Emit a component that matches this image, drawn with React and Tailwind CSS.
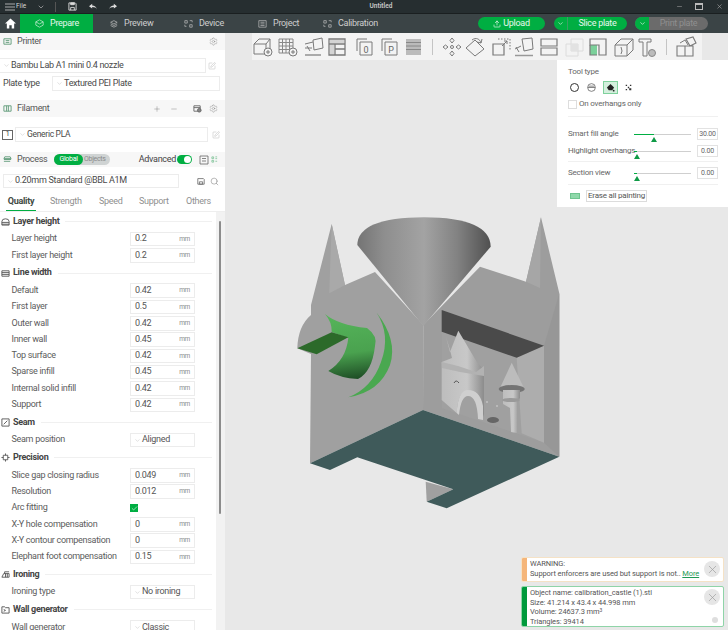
import React from 'react';
import { ChevronDown, Settings, Search, SquarePen, Plus, Minus, X, Check, Upload as UploadIcon } from 'lucide-react';

const Ic = ({ children, className = 'w-[22px] h-[22px]', sw = 1, vb = '0 0 22 22' }) => (
    <svg viewBox={vb} className={`shrink-0 ${className}`} fill="none" stroke="#7a7a7a" strokeWidth={sw}>{children}</svg>
);

// top toolbar icons, one drawing per tool
const toolbarIcons = [
    { ml: 'ml-0', el: <><path d="M2 8l5-5h11v10l-4 5H2zM2 8h12v10M14 8l4-5" /><circle cx="16" cy="16" r="4" fill="#f3f3f3" /><path d="M16 14v4M14 16h4" /></> },
    { ml: 'ml-[3px]', el: <><path d="M2 3h14v14H2zM2 6.500h14M2 10h14M2 13.500h14M5.500 3v14M9 3v14M12.500 3v14" stroke="#888" /><circle cx="16" cy="16" r="4" fill="#f3f3f3" /><path d="M16 14v4M14 16h4" /></> },
    { ml: 'ml-[4px]', el: <><path d="M10 4l9-2 1 10-9 2zM2 8l8-2M2 12l7 0M4 10l3 5" /><path d="M2 19h16" strokeWidth="2" stroke="#aaa" /></> },
    { ml: 'ml-[1px]', el: <><path d="M4 4h14v3H4zM4 9h4v9H4z" fill="#d4d4d4" stroke="none" /><path d="M3 3h16v16H3z" strokeWidth="1.300" /><path d="M3 8h16M9 8v11M9 13h10" strokeWidth="1.300" /></> },
    { ml: 'ml-[6px]', el: <><path d="M3 15V3h10M6 19V6h12v13z" /><text x="12" y="16.500" fontSize="9" textAnchor="middle" fill="#666" stroke="none">0</text></> },
    { ml: 'ml-[3px]', el: <><path d="M3 15V3h10M6 19V6h12v13z" /><text x="12" y="16.500" fontSize="9" textAnchor="middle" fill="#666" stroke="none">P</text></> },
    { ml: 'ml-[1px]', el: <><path d="M4 3h15v16H4z" fill="#bbb" stroke="none" /><path d="M4 6.500h15M4 10h15M4 13.500h15" stroke="#888" /></> },
    { sep: true, ml: 'ml-[8px]' },
    { ml: 'ml-[8px]', el: <><path d="M11 2l2 2.500-2 2.500-2-2.500zM11 15l2 2.500-2 2.500-2-2.500zM2 11l2.500-2 2.500 2-2.500 2zM15 11l2.500-2 2.500 2-2.500 2z" /><circle cx="11" cy="11" r="1.500" /></> },
    { ml: 'ml-[1px]', el: <><path d="M2 12l9-8 9 9-9 7zM8 4c4-3 8-1 9 3M17 7l1-4M17 7l-4-1" /></> },
    { ml: 'ml-[4px]', el: <><path d="M3 8h11v11H3z" strokeWidth="1.200" /><path d="M8 3h12v12" strokeDasharray="1.500 1.500" /><path d="M12 10l5-5M14 5h3v3" /></> },
    { ml: 'ml-[1px]', el: <><path d="M9 3l10-1 1 11-9 2zM2 13l6-3M3 11l3 5" /><path d="M2 19.500h18" strokeWidth="1.500" stroke="#999" /></> },
    { ml: 'ml-[3px]', el: <><path d="M3 3h16v7H3zM3 12h16v7H3z" strokeWidth="1.200" /></> },
    { ml: 'ml-[3px]', el: <><path d="M3 8h12v12H3zM8 3h12v12H8z" stroke="#dcdcdc" /><path d="M8 8h7v7H8z" fill="#e2e2e2" stroke="none" /></> },
    { ml: 'ml-[2px]', el: <><path d="M3 9h7v10H3z" fill="#7bd09a" stroke="none" /><path d="M3 3h16v16h-7V9H3z" strokeWidth="1.200" /><path d="M3 9v10h7" strokeWidth="1.200" /></> },
    { ml: 'ml-[4px]', el: <><path d="M2 9l6-6h12v11l-6 6H2zM2 9h12v11M14 9l6-6M8 11l1 4 -1 3" /></> },
    { ml: 'ml-[1px]', el: <><path d="M3 3h12v3h-4v14H7V6H3z" /><circle cx="16" cy="17" r="3.500" fill="#bbb" stroke="#888" /></> },
    { sep: true, ml: 'ml-[8px]' },
    { ml: 'ml-[8px]', el: <><path d="M2 10h8v10H2zM10 10h8v10h-8M11 3l7-2 3 6-6 3z" strokeWidth="1.100" /><path d="M5 7l5-3 3 5" /></> },
];

const Dropdown = ({ className, text, textClass = '' }) => (
    <div className={`flex items-center border border-[#ececec] bg-white ${className}`}>
        <ChevronDown size={7} strokeWidth={1} className="ml-[3px] shrink-0 text-[#999]" />
        <span className={`ml-[1px] text-[#4a4a4a] text-[9px] whitespace-nowrap ${textClass}`}>{text}</span>
    </div>
);

const Row = ({ label, value, select, check }) => (
    <div className="flex items-center h-[16.300px] pl-[11.500px]">
        <span className="w-[118.500px] text-[9px] text-[#5c5c5c] whitespace-nowrap">{label}</span>
        {check ? (
            <div className="w-[8px] h-[8px] bg-[#00ae42] flex items-center justify-center">
                <Check size={7} strokeWidth={2} className="text-white" />
            </div>
        ) : select ? (
            <Dropdown className="w-[65px] h-[14.500px]" text={value} textClass="!text-[#555]" />
        ) : (
            <div className="w-[65px] h-[14.500px] border border-[#ececec] flex items-center justify-between pl-[4px] pr-[4px]">
                <span className="text-[9px] text-[#555]">{value}</span>
                <span className="text-[6.500px] text-[#8a8a8a] pt-[1px]">mm</span>
            </div>
        )}
    </div>
);

const Group = ({ icon, title, children }) => (
    <div>
        <div className="flex items-center h-[19px] pl-[1px] pr-[4px]">
            <svg viewBox="0 0 10 10" className="w-[9px] h-[9px] shrink-0" fill="none" stroke="#555" strokeWidth="1">{icon}</svg>
            <span className="ml-[3px] text-[9px] font-bold text-[#444] whitespace-nowrap">{title}</span>
            <div className="flex-1 ml-[6px] h-px bg-[#f0f0f0]" />
        </div>
        {children}
    </div>
);

const SectionHead = ({ icon, title, children, className }) => (
    <div className={`flex items-center bg-[#f7f7f7] pl-[3px] pr-[7px] ${className}`}>
        <svg viewBox="0 0 10 10" className="w-[9px] h-[9px] shrink-0" fill="none" stroke="#5d9a78" strokeWidth="1">{icon}</svg>
        <span className="ml-[5px] text-[9px] text-[#555]">{title}</span>
        <div className="flex-1" />
        {children}
    </div>
);

const Slider = ({ label, fill, value, className }) => (
    <div className={`flex items-center ${className}`}>
        <span className="w-[66px] text-[8px] text-[#666] whitespace-nowrap">{label}</span>
        <div className="relative w-[57px] h-px bg-[#cfcfcf]">
            <div className="h-px bg-[#00ae42]" style={{ width: fill }} />
            <div
                className="absolute top-[3px] w-0 h-0 border-l-[3px] border-r-[3px] border-b-[5px] border-l-transparent border-r-transparent border-b-[#0f9a46]"
                style={{ left: fill - 3 }}
            />
        </div>
        <div className="ml-[6px] w-[21px] h-[12px] border border-[#e2e2e2] flex items-center justify-center text-[7px] text-[#666]">{value}</div>
    </div>
);

// the 3D model on the plate
const Model = () => (
    <svg viewBox="280 200 290 320" className="absolute left-[280px] top-[167px] w-[290px] h-[320px]">
        <defs>
            <linearGradient id="cone" x1="0" y1="0" x2="1" y2="0">
                <stop offset="0" stopColor="#747474" />
                <stop offset="0.2" stopColor="#8e8e8e" />
                <stop offset="0.5" stopColor="#a3a3a3" />
                <stop offset="0.75" stopColor="#828282" />
                <stop offset="1" stopColor="#505050" />
            </linearGradient>
            <linearGradient id="scoop" x1="0.4" y1="0" x2="0.5" y2="1">
                <stop offset="0" stopColor="#55b45a" />
                <stop offset="0.6" stopColor="#4aa24f" />
                <stop offset="1" stopColor="#1f4f26" />
            </linearGradient>
            <linearGradient id="tower" x1="0" y1="0" x2="1" y2="0">
                <stop offset="0" stopColor="#bdbdbd" />
                <stop offset="0.6" stopColor="#c8c8c8" />
                <stop offset="1" stopColor="#8c8c8c" />
            </linearGradient>
        </defs>
        {/* left wall */}
        <path d="M297.300 348.300Q298 326 311 315L311 305L331.700 224L345 285L375 272L423.300 325L423 410L310 463.300L311 354Z" fill="#a0a0a0" />
        <path d="M331.700 224L329.300 293.300L345 285Z" fill="#a9a9a9" />
        {/* right wall */}
        <path d="M423.300 325L480 266.700L526 281.700L541 217.300L559.300 293.300V456.700L423 410Z" fill="#9d9d9d" />
        <path d="M541 217.300L526 281.700L540 288Z" fill="#a6a6a6" />
        <path d="M544 345.700L559.300 293.300V456.700L544 442.700Z" fill="#979797" />
        {/* opening */}
        <path d="M441.700 310L544 345.700V442.700L441.700 408Z" fill="#a0a0a0" />
        <path d="M516.700 357.700L544 345.700V442.700L521.700 433.300Z" fill="#adadad" />
        <path d="M441.700 310L544 345.700L516.700 357.700L441.700 331.700Z" fill="#4a4a4a" />
        {/* cone */}
        <path d="M357.300 245Q358 217.500 424 217.300Q490 217.500 490.700 246.700L423.300 326Z" fill="url(#cone)" />
        {/* painted part */}
        <path d="M325 314Q338 325 367 328Q378 336 375 346Q372 372 358 379Q340 378 328.300 371Q346 360 348.300 338L331.700 332Q332 322 325 314Z" fill="url(#scoop)" />
        <path d="M376.700 312.700Q398 340 390 365Q380 392 348.300 397.300Q372 388 381 362Q391 335 376.700 312.700Z" fill="#4aa850" />
        <path d="M297.300 348.300L331.700 332.300L348.300 337.300L316.700 354.300Z" fill="#2c6a2a" />
        {/* castle */}
        <path d="M446 337L450 350L452 358L441.700 362V400L456.700 413Q458 392 466 392Q478 392 482 420L484 414V370L476.700 361.700L458.300 330.700L450 352Z" fill="url(#tower)" />
        <path d="M441.700 362L458 366L476 372L484 366L484 376L460 372L442 368Z" fill="#b2b2b2" />
        <path d="M454 383Q456 379 459 383" stroke="#555" fill="none" strokeWidth="1" />
        <path d="M456.700 413Q458 390 468 390Q480 390 483 406L483 420L478 419Q477 396 468 396Q461 396 459 415Z" fill="#cfcfcf" />
        <path d="M511.700 362.700L524 388H500Z" fill="#bcbcbc" />
        <ellipse cx="511.700" cy="389" rx="13" ry="4" fill="#747474" />
        <path d="M503 390H520V398L517 402V433L511 432L510 408L503 404Z" fill="url(#tower)" />
        <ellipse cx="511" cy="400" rx="9" ry="2" fill="#9a9a9a" />
        <ellipse cx="493" cy="420" rx="6" ry="3" fill="#666" />
        <circle cx="487" cy="402" r="1" fill="#c2c2c2" />
        <circle cx="497" cy="406" r="1" fill="#c2c2c2" />
        {/* bottom */}
        <path d="M425.700 481.700L453.300 489.300L426.700 501.700Z" fill="#a0a0a0" />
        <path d="M423 410L559.300 456.700L446.700 508.300L426.700 501.700L453.300 489.300L357.300 457.300L330 470L310 463.300Z" fill="#3f5a5a" />
    </svg>
);

const App = () => {
    const navTabs = [
        { label: 'Preview', cls: 'w-[75px]', icon: <path d="M2 4l4-2 4 2-4 2zM2 6l4 2 4-2M2 8l4 2 4-2" /> },
        { label: 'Device', cls: 'w-[74px]', icon: <path d="M1 2h3v3H1zM7 2h3M10 2v2M1 7v2h2M7 7h3v3H7z" /> },
        { label: 'Project', cls: 'w-[65px]', icon: <path d="M1 2h9v8H1zM3 4h5M3 6h5M3 8h5" /> },
        { label: 'Calibration', cls: 'w-[90px]', icon: <path d="M1 2h3v3H1zM7 2h3M10 2v2M1 7v2h2M7 7h3v3H7z" /> },
    ];

    return (
        <div className="relative w-[728px] h-[630px] overflow-hidden flex flex-col bg-[#e8e8e8] tracking-[-0.3px]" style={{ fontFamily: 'Roboto, sans-serif' }}>
            {/* Title bar */}
            <div className="flex items-center h-[14px] bg-[#262e30] text-[#d6d6d6] border-b border-[#1a1f20] relative tracking-normal">
                <svg viewBox="0 0 10 8" className="ml-[5px] w-[10px] h-[8px]" stroke="#ccc" strokeWidth="0.800"><path d="M0 1h10M0 4h10M0 7h10" /></svg>
                <span className="ml-[1px] w-[9px] text-[6.500px]">File</span>
                <ChevronDown size={8} className="ml-[12px] text-[#bbb]" />
                <div className="ml-[10px] w-px h-[10px] bg-[#555]" />
                <svg viewBox="0 0 10 10" className="ml-[12px] w-[9px] h-[9px]" fill="none" stroke="#ddd" strokeWidth="1"><path d="M1 1h7l1 1v7H1zM3 9V6h4v3" /><path d="M3 1h4v2H3z" fill="#ddd" /></svg>
                <svg viewBox="0 0 10 10" className="ml-[12px] w-[8px] h-[8px]" fill="#ddd"><path d="M0 4L4 1v2c3 0 5 2 6 5-1-2-3-3-6-3v2z" /></svg>
                <svg viewBox="0 0 10 10" className="ml-[12px] w-[8px] h-[8px]" fill="#ddd"><path d="M10 4L6 1v2C3 3 1 5 0 8c1-2 3-3 6-3v2z" /></svg>
                <span className="absolute left-[381px] text-[6.500px] font-semibold text-[#c8c8c8] -translate-x-1/2">Untitled</span>
                <div className="flex-1" />
                <Minus size={7} className="text-[#999]" />
                <div className="ml-[12px] w-[8px] h-[7px] border border-[#bbb] border-t-2" />
                <X size={7} className="ml-[13px] mr-[5px] text-[#aaa]" />
            </div>

            {/* Nav bar */}
            <div className="flex items-center h-[19px] bg-[#3b4446] text-[#cfcfcf] text-[9px]">
                <div className="w-[20px] flex justify-center">
                    <svg viewBox="0 0 12 12" className="w-[11px] h-[11px]" fill="#fff"><path d="M6 0.500L12 6h-2v5.500H7.300V8H4.700v3.500H2V6H0z" /></svg>
                </div>
                <div className="flex items-center w-[73px] h-full bg-[#00ae42] text-[#e6f7ec] pl-[15px]">
                    <svg viewBox="0 0 11 11" className="w-[9px] h-[9px]" fill="none" stroke="#dff5e6" strokeWidth="0.800"><path d="M5.500 1L10 3.500v4L5.500 10 1 7.500v-4zM1 3.500l4.500 2.500L10 3.500" /></svg>
                    <span className="ml-[6px]">Prepare</span>
                </div>
                <div className="w-[16px]" />
                {navTabs.map(t => (
                    <div key={t.label} className={`flex items-center ${t.cls}`}>
                        <svg viewBox="0 0 11 11" className="w-[9px] h-[9px]" fill="none" stroke="#c4c4c4" strokeWidth="0.800">{t.icon}</svg>
                        <span className="ml-[6px]">{t.label}</span>
                    </div>
                ))}
                <div className="flex-1" />
                <div className="flex items-center justify-center gap-[2px] w-[67px] h-[13px] rounded-full bg-[#00ae42] text-[#e8f8ee]">
                    <UploadIcon size={8} />
                    <span>Upload</span>
                </div>
                <div className="flex items-center ml-[9px] w-[73px] h-[13px] rounded-full bg-[#00ae42] text-[#e8f8ee] overflow-hidden">
                    <div className="w-[14px] h-full flex items-center justify-center border-r border-[#3b9f63]"><ChevronDown size={7} /></div>
                    <span className="flex-1 text-center">Slice plate</span>
                </div>
                <div className="flex items-center ml-[8px] mr-[20px] w-[73px] h-[13px] rounded-full bg-[#6b6b6b] text-[#8f8f8f] overflow-hidden">
                    <div className="w-[14px] h-full flex items-center justify-center bg-[#00ae42] text-white"><ChevronDown size={7} /></div>
                    <span className="flex-1 text-center">Print plate</span>
                </div>
            </div>

            <div className="flex flex-1 min-h-0">
                {/* Sidebar */}
                <div className="w-[225px] bg-white flex flex-col shrink-0">
                    <SectionHead className="h-[17px]" title="Printer" icon={<path d="M1 2h8v6H1zM3 4h4M3 6h4" />}>
                        <Settings size={9} strokeWidth={1} className="text-[#777]" />
                    </SectionHead>
                    <div className="flex items-center mt-[8px] h-[15px]">
                        <Dropdown className="w-[206px] h-[15px] border-l-0" text="Bambu Lab A1 mini 0.4 nozzle" />
                        <SquarePen size={8} strokeWidth={1} className="ml-[2px] text-[#999]" />
                    </div>
                    <div className="flex items-center mt-[3px] h-[15px]">
                        <span className="ml-[3px] w-[49px] text-[9px] text-[#4a4a4a]">Plate type</span>
                        <Dropdown className="w-[168px] h-[15px]" text="Textured PEI Plate" />
                    </div>
                    <SectionHead className="h-[17px] mt-[9px]" title="Filament" icon={<path d="M1 2h8v6H1zM4 2v6M6 2v6" />}>
                        <Plus size={8} strokeWidth={1} className="text-[#555]" />
                        <Minus size={8} strokeWidth={1} className="ml-[9px] text-[#555]" />
                        <svg viewBox="0 0 10 10" className="ml-[15px] w-[9px] h-[9px]" fill="none" stroke="#666"><path d="M1 2h7v6H1zM1 4h7" /><circle cx="7" cy="7" r="2" fill="#888" /></svg>
                        <Settings size={9} strokeWidth={1} className="ml-[7px] text-[#777]" />
                    </SectionHead>
                    <div className="flex items-center mt-[10px] h-[15px]">
                        <div className="ml-[2px] w-[11px] h-[10px] border border-[#666] flex items-center justify-center text-[7px] text-[#444]">1</div>
                        <Dropdown className="ml-[2px] w-[193px] h-[15px]" text="Generic PLA" textClass="!text-[8.500px]" />
                        <SquarePen size={8} strokeWidth={1} className="ml-[4px] text-[#999]" />
                    </div>
                    <SectionHead className="h-[15px] mt-[10px]" title="Process" icon={<path d="M2 2h6l1 2H1zM1 5h8M1 7h7" />}>
                        <div className="absolute left-[54px] flex items-center w-[56px] h-[11px] rounded-full bg-[#cfd3d3] text-[7px]">
                            <div className="w-[29px] h-full rounded-full bg-[#00ae42] text-white flex items-center justify-center">Global</div>
                            <span className="ml-[1px] text-[#8a8a8a]">Objects</span>
                        </div>
                        <span className="text-[9px] text-[#444]">Advanced</span>
                        <div className="ml-[1px] w-[15px] h-[9px] rounded-full bg-[#00ae42] flex items-center justify-end pr-px">
                            <div className="w-[7px] h-[7px] rounded-full bg-white" />
                        </div>
                        <svg viewBox="0 0 10 10" className="ml-[7px] w-[10px] h-[10px]" fill="none" stroke="#666" strokeWidth="0.800"><path d="M1 1h8v8H1zM3 3.500h4M3 6h4" /></svg>
                        <svg viewBox="0 0 8 10" className="ml-[2px] w-[7px] h-[9px]" fill="none" stroke="#6dbb8a" strokeWidth="0.800"><path d="M1 2h2v2H1zM1 6h2v2H1zM5 2h2M5 4h2M5 7h2" /></svg>
                    </SectionHead>
                    <div className="flex items-center mt-[7px] h-[14px]">
                        <Dropdown className="ml-[3px] w-[176px] h-[14px]" text="0.20mm Standard @BBL A1M" />
                        <svg viewBox="0 0 10 10" className="ml-[18px] w-[8px] h-[8px]" fill="none" stroke="#666"><path d="M1 2h7l1 1v6H1zM3 6h4v3H3z" /></svg>
                        <Search size={9} strokeWidth={1.200} className="ml-[5px] text-[#666]" />
                    </div>
                    <div className="flex items-end mt-[6px] h-[18px] pt-[1px] border-b border-[#eeeeee] text-[9px] text-[#8f8f8f]">
                        <div className="ml-[6px] w-[30px] h-full text-center font-bold text-[#3f4a44] border-b-[1.500px] border-[#00ae42]">Quality</div>
                        <div className="ml-[14px] w-[33px] h-full">Strength</div>
                        <div className="ml-[16px] w-[23px] h-full">Speed</div>
                        <div className="ml-[17px] w-[30px] h-full">Support</div>
                        <div className="ml-[17px] w-[25px] h-full">Others</div>
                    </div>
                    <div className="flex flex-1 min-h-0 overflow-hidden">
                        <div className="w-[216px] shrink-0">
                            <Group title="Layer height" icon={<path d="M1 5a4 3 0 0 1 8 0v4H1zM1 6h8M1 8h8" />}>
                                <Row label="Layer height" value="0.2" />
                                <Row label="First layer height" value="0.2" />
                            </Group>
                            <Group title="Line width" icon={<path d="M1 2h8v6H1zM1 4h8M1 6h8" />}>
                                <Row label="Default" value="0.42" />
                                <Row label="First layer" value="0.5" />
                                <Row label="Outer wall" value="0.42" />
                                <Row label="Inner wall" value="0.45" />
                                <Row label="Top surface" value="0.42" />
                                <Row label="Sparse infill" value="0.45" />
                                <Row label="Internal solid infill" value="0.42" />
                                <Row label="Support" value="0.42" />
                            </Group>
                            <Group title="Seam" icon={<path d="M1 1h8v8H1zM3 7l4-4" />}>
                                <Row label="Seam position" value="Aligned" select />
                            </Group>
                            <Group title="Precision" icon={<path d="M2.500 2.500h5v5h-5zM5 0.500v2M5 7.500v2M0.500 5h2M7.500 5h2" />}>
                                <Row label="Slice gap closing radius" value="0.049" />
                                <Row label="Resolution" value="0.012" />
                                <Row label="Arc fitting" check />
                                <Row label="X-Y hole compensation" value="0" />
                                <Row label="X-Y contour compensation" value="0" />
                                <Row label="Elephant foot compensation" value="0.15" />
                            </Group>
                            <Group title="Ironing" icon={<path d="M1 8l2-4h6v4zM4 4V2h5M5 4v4M7 4v4" />}>
                                <Row label="Ironing type" value="No ironing" select />
                            </Group>
                            <Group title="Wall generator" icon={<path d="M1 2h3l1 1h4v6H1zM3 5l2 1-2 1" />}>
                                <Row label="Wall generator" value="Classic" select />
                            </Group>
                        </div>
                        <div className="flex-1 bg-[#f2f2f2] pl-[3px] pt-[9px]">
                            <div className="w-[2px] h-[293px] rounded-full bg-[#8c8c8c]" />
                        </div>
                    </div>
                </div>

                {/* Canvas */}
                <div className="relative flex-1" />
            </div>

            <div className="absolute left-0 top-[33px] w-[728px] h-[597px] pointer-events-none">
                <Model />
                {/* Toolbar */}
                <div className="absolute left-[252px] top-0 w-[450px] h-[27px] bg-[#f3f3f3] flex items-center">
                    {toolbarIcons.map((t, i) => t.sep ? (
                        <div key={i} className={`w-px h-[16px] bg-[#c4c4c4] ${t.ml}`} />
                    ) : (
                        <div key={i} className={t.ml}><Ic>{t.el}</Ic></div>
                    ))}
                </div>
                {/* Paint panel */}
                <div className="absolute left-[557px] top-[27px] w-[171px] h-[147px] bg-white pl-[11px] pr-[10px] tracking-[-0.2px]">
                    <div className="pt-[6px] h-[17px] text-[8px] text-[#666]">Tool type</div>
                    <div className="flex items-center mt-[3px] h-[14px]">
                        <div className="w-[9px] h-[9px] ml-[2px] rounded-full border border-[#333]" />
                        <svg viewBox="0 0 10 10" className="ml-[8px] w-[9px] h-[9px]" fill="none" stroke="#555" strokeWidth="0.800"><circle cx="5" cy="5" r="4.300" /><path d="M1 5h8M2 3.500h6" /></svg>
                        <div className="ml-[7px] w-[15px] h-[13px] bg-[#d4efdd] border border-[#7fd19c] flex items-center justify-center">
                            <svg viewBox="0 0 10 10" className="w-[9px] h-[9px]" fill="#222"><path d="M5 1l4 4-2 3H3L1 5z" /><circle cx="8.500" cy="8.500" r="1" /></svg>
                        </div>
                        <svg viewBox="0 0 10 10" className="ml-[7px] w-[7px] h-[7px]" fill="#333"><path d="M1 1h2v2H1zM7 1h2v2H7zM1 7h2v2H1zM6 6h3v3H6zM4 4h2v2H4z" /></svg>
                    </div>
                    <div className="flex items-center mt-[5px] h-[10px]">
                        <div className="w-[9px] h-[9px] border border-[#ddd]" />
                        <span className="ml-[2px] text-[8px] text-[#666]">On overhangs only</span>
                    </div>
                    <div className="mt-[7px] h-px bg-[#f0f0f0]" />
                    <Slider label="Smart fill angle" fill={20} value="30.00" className="mt-[11px] h-[12px]" />
                    <Slider label="Highlight overhangs" fill={3} value="0.00" className="mt-[5px] h-[12px]" />
                    <div className="mt-[4px] h-px bg-[#f0f0f0]" />
                    <Slider label="Section view" fill={3} value="0.00" className="mt-[5px] h-[12px]" />
                    <div className="mt-[5px] h-px bg-[#f0f0f0]" />
                    <div className="flex items-center mt-[5px] h-[12px]">
                        <div className="ml-[2px] w-[10px] h-[6px] bg-[#8fd8aa] border border-[#6fc490] shrink-0" />
                        <div className="ml-[6px] w-[61px] h-[12px] border border-[#dcdcdc] flex items-center justify-center text-[8px] text-[#555] whitespace-nowrap">Erase all painting</div>
                    </div>
                </div>
                {/* Notifications */}
                <div className="absolute left-[521px] top-[524px] w-[203px] flex flex-col gap-[4px] tracking-[-0.1px]">
                    <div className="relative h-[25px] bg-white border border-[#f5e2c6] rounded-[2px] overflow-hidden pl-[8px] pt-[1px] text-[7.500px] leading-[10px] text-[#555]">
                        <div className="absolute left-0 top-0 bottom-0 w-[5px] bg-[#f5b67a]" />
                        <div>WARNING:</div>
                        <div className="whitespace-nowrap">Support enforcers are used but support is not.. <span className="text-[#1f9a55] underline">More</span></div>
                        <div className="absolute right-[3px] top-[3px] w-[16px] h-[16px] rounded-full bg-[#e6e6e6] flex items-center justify-center"><X size={13} strokeWidth={1.200} className="text-[#999]" /></div>
                    </div>
                    <div className="relative h-[41px] bg-white border border-[#8fd4a8] rounded-[2px] overflow-hidden pl-[8px] pt-[1px] text-[7.500px] leading-[9.500px] text-[#555]">
                        <div className="absolute left-0 top-0 bottom-0 w-[5px] bg-[#009a3c]" />
                        <div>Object name: calibration_castle (1).stl</div>
                        <div>Size: 41.214 x 43.4 x 44.998 mm</div>
                        <div>Volume: 24637.3 mm<sup className="text-[5px]">3</sup></div>
                        <div>Triangles: 39414</div>
                        <div className="absolute right-[3px] top-[2px] w-[16px] h-[16px] rounded-full bg-[#e6e6e6] flex items-center justify-center"><X size={13} strokeWidth={1.200} className="text-[#999]" /></div>
                        <div className="absolute right-[5px] bottom-[3px] w-[6px] h-[6px] rounded-full bg-[#dedede]" />
                    </div>
                </div>
            </div>
        </div>
    );
};

export default App;
